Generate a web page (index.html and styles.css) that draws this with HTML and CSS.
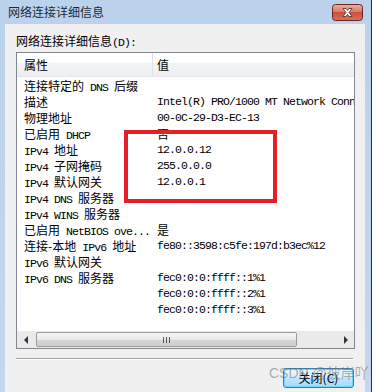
FILE: index.html
```html
<!DOCTYPE html>
<html lang="zh-CN">
<head>
    <meta charset="UTF-8">
    <title>网络连接详细信息</title>
    <link rel="stylesheet" href="styles.css">
</head>
<body>
    <div class="window">
        <div class="titlebar">
            <span class="title">网络连接详细信息</span>
            <div class="close-x">
                <svg width="31" height="17" viewBox="0 0 31 17">
                    <defs>
                        <linearGradient id="red" x1="0" y1="0" x2="0" y2="1">
                            <stop offset="0" stop-color="#eab2a6"/>
                            <stop offset="0.45" stop-color="#d97b68"/>
                            <stop offset="0.5" stop-color="#c8513c"/>
                            <stop offset="1" stop-color="#d7725a"/>
                        </linearGradient>
                    </defs>
                    <rect x="0.5" y="0.5" width="30" height="16" rx="3" fill="url(#red)" stroke="#6a2424"/>
                    <path d="M11 4.5h3l1.5 2 1.5-2h3l-3 4 3 4h-3l-1.5-2-1.5 2h-3l3-4z" fill="#fff" stroke="#4a2a2a" stroke-width="0.8" stroke-linejoin="round"/>
                </svg>
            </div>
        </div>

        <div class="client">
            <div class="label">网络连接详细信息<span class="en">(D):</span></div>

            <div class="listview">
                <div class="lv-head">
                    <div class="k">属性</div>
                    <div class="v">值</div>
                </div>
                <div class="lv-body">
                    <div class="row"><div class="k">连接特定的<span class="en"> DNS </span>后缀</div><div class="v"></div></div>
                    <div class="row"><div class="k">描述</div><div class="v">Intel(R) PRO/1000 MT Network Connection</div></div>
                    <div class="row"><div class="k">物理地址</div><div class="v">00-0C-29-D3-EC-13</div></div>
                    <div class="row"><div class="k">已启用<span class="en"> DHCP</span></div><div class="v"><span class="zh">否</span></div></div>
                    <div class="row"><div class="k"><span class="en">IPv4 </span>地址</div><div class="v">12.0.0.12</div></div>
                    <div class="row"><div class="k"><span class="en">IPv4 </span>子网掩码</div><div class="v">255.0.0.0</div></div>
                    <div class="row"><div class="k"><span class="en">IPv4 </span>默认网关</div><div class="v">12.0.0.1</div></div>
                    <div class="row"><div class="k"><span class="en">IPv4 DNS </span>服务器</div><div class="v"></div></div>
                    <div class="row"><div class="k"><span class="en">IPv4 WINS </span>服务器</div><div class="v"></div></div>
                    <div class="row"><div class="k">已启用<span class="en"> NetBIOS ove...</span></div><div class="v"><span class="zh">是</span></div></div>
                    <div class="row"><div class="k">连接-本地<span class="en"> IPv6 </span>地址</div><div class="v">fe80::3598:c5fe:197d:b3ec%12</div></div>
                    <div class="row"><div class="k"><span class="en">IPv6 </span>默认网关</div><div class="v"></div></div>
                    <div class="row"><div class="k"><span class="en">IPv6 DNS </span>服务器</div><div class="v">fec0:0:0:ffff::1%1</div></div>
                    <div class="row"><div class="k"></div><div class="v">fec0:0:0:ffff::2%1</div></div>
                    <div class="row"><div class="k"></div><div class="v">fec0:0:0:ffff::3%1</div></div>
                </div>
                <div class="hscroll">
                    <div class="arrow left"></div>
                    <div class="thumb"><span class="grip"></span></div>
                    <div class="arrow right"></div>
                </div>
            </div>

            <div class="sep"></div>

            <div class="buttons">
                <button class="btn">关闭(C)</button>
            </div>
        </div>
    </div>

    <!-- 标注 -->
    <div class="mark"></div>
    <div class="watermark">CSDN @彼岸吖</div>
</body>
</html>
```

FILE: styles.css
```css
body {
    margin: 0;
    padding: 0;
    width: 384px;
    height: 392px;
    background: #fff;
    overflow: hidden;
    font-family: "Noto Sans CJK SC", sans-serif;
    font-size: 12px;
    color: #000;
}

.window {
    width: 372px;
    height: 392px;
    box-sizing: border-box;
    padding: 0 6px 0 5px;
    background: linear-gradient(#bbd2ec, #c3d8ef);
    border-right: 1px solid #2e2e2e;
    display: flex;
    flex-direction: column;
}

.titlebar {
    height: 24px;
    flex-shrink: 0;
    display: flex;
    justify-content: space-between;
    align-items: flex-start;
    padding: 0 2px 0 3px;
}

.title {
    line-height: 24px;
    font-size: 12px;
    color: #1e2a3a;
}

.close-x {
    margin-top: 4px;
    width: 31px;
    height: 17px;
}

.close-x svg {
    display: block;
}

.client {
    flex: 1;
    background: #f0f0f0;
    padding: 9px 0 0 11px;
    display: flex;
    flex-direction: column;
}

.label {
    line-height: 16px;
    margin-bottom: 1px;
}

.en {
    font-family: "Liberation Mono", monospace;
    font-size: 11.5px;
    letter-spacing: -0.9px;
    white-space: pre;
}

.listview {
    width: 339px;
    height: 297px;
    box-sizing: border-box;
    border: 1px solid #828790;
    background: #fff;
    display: flex;
    flex-direction: column;
    overflow: hidden;
}

.lv-head {
    height: 24px;
    flex-shrink: 0;
    box-sizing: border-box;
    display: flex;
    background: linear-gradient(#fff 0%, #fff 40%, #f3f4f6 45%, #eceef1 100%);
    border-bottom: 1px solid #e6e7ea;
}

.lv-head .k,
.lv-head .v {
    line-height: 23px;
}

.lv-head .k {
    border-right: 1px solid #e0e2e5;
}

.k {
    width: 136px;
    flex-shrink: 0;
    box-sizing: border-box;
    padding-left: 7px;
    white-space: nowrap;
    overflow: hidden;
}

.v {
    padding-left: 4px;
    white-space: nowrap;
}

.lv-body {
    flex: 1;
    padding-top: 1px;
    overflow: hidden;
}

.row {
    display: flex;
    height: 16px;
    line-height: 16px;
}

.row .v {
    font-family: "Liberation Mono", monospace;
    font-size: 11.5px;
    letter-spacing: -0.9px;
}

.row .v .zh {
    font-family: "Noto Sans CJK SC", sans-serif;
    font-size: 12px;
    letter-spacing: 0;
}

.hscroll {
    height: 17px;
    flex-shrink: 0;
    display: flex;
    align-items: center;
    background: #eaeaea;
}

.arrow {
    width: 17px;
    height: 17px;
    display: flex;
    align-items: center;
    justify-content: center;
}

.arrow::before {
    content: '';
    width: 0;
    height: 0;
    border-top: 4px solid transparent;
    border-bottom: 4px solid transparent;
}

.arrow.left::before {
    border-right: 4px solid #333;
}

.arrow.right {
    margin-left: auto;
}

.arrow.right::before {
    border-left: 4px solid #333;
}

.thumb {
    width: 261px;
    height: 15px;
    margin-left: 2px;
    box-sizing: border-box;
    border: 1px solid #9c9c9c;
    border-radius: 2px;
    background: linear-gradient(#f4f4f4, #e9e9e9 50%, #d6d6d6 51%, #cfcfcf);
    display: flex;
    align-items: center;
    justify-content: center;
}

.grip {
    width: 7px;
    height: 6px;
    background: linear-gradient(90deg, #555 0 1px, transparent 1px 3px, #555 3px 4px, transparent 4px 6px, #555 6px 7px);
}

.sep {
    width: 337px;
    height: 1px;
    margin-top: 9px;
    background: #a0a0a0;
    border-bottom: 1px solid #fff;
}

.buttons {
    width: 338px;
    margin-top: 8px;
    display: flex;
    justify-content: flex-end;
}

.btn {
    width: 71px;
    height: 20px;
    padding: 0;
    font-family: "Noto Sans CJK SC", sans-serif;
    font-size: 12px;
    line-height: 18px;
    color: #000;
    border: 1px solid #3c7fb1;
    border-radius: 3px;
    background: linear-gradient(#eaf6fd, #d9f0fc 45%, #bee6fd 50%, #a7d9f5);
    box-shadow: inset 0 0 0 1px #6fd3ff;
}

.mark {
    position: absolute;
    left: 124px;
    top: 130px;
    width: 153px;
    height: 73px;
    box-sizing: border-box;
    border: 4px solid #e61e25;
}

.watermark {
    position: absolute;
    left: 269px;
    top: 364px;
    font-family: "Liberation Sans", "Noto Sans CJK SC", sans-serif;
    font-size: 14px;
    line-height: 18px;
    color: rgba(100, 100, 100, 0.5);
    white-space: nowrap;
}
```
